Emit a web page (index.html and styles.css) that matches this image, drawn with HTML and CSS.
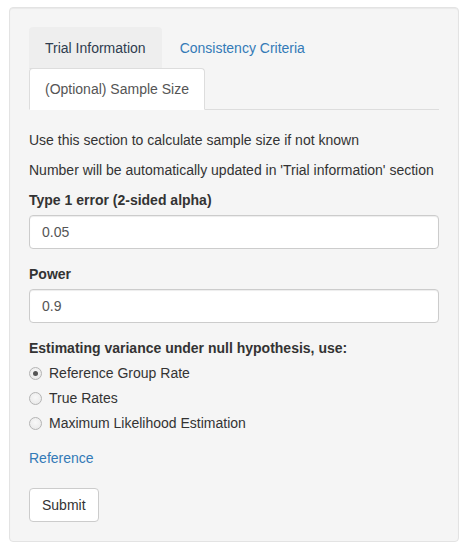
FILE: index.html
```html
<!DOCTYPE html>
<html>
<head>
<meta charset="utf-8">
<link rel="stylesheet" href="styles.css">
</head>
<body>
<div class="well">
  <ul class="nav-tabs">
    <li class="tab tab-hover"><a>Trial Information</a></li>
    <li class="tab"><a class="link">Consistency Criteria</a></li>
    <li class="tab tab-active"><a>(Optional) Sample Size</a></li>
  </ul>
  <div class="tab-pane">
    <p>Use this section to calculate sample size if not known</p>
    <p>Number will be automatically updated in 'Trial information' section</p>
    <div class="form-group">
      <label class="control-label">Type 1 error (2-sided alpha)</label>
      <input class="form-control" type="text" value="0.05">
    </div>
    <div class="form-group">
      <label class="control-label">Power</label>
      <input class="form-control" type="text" value="0.9">
    </div>
    <div class="form-group">
      <label class="control-label">Estimating variance under null hypothesis, use:</label>
      <div class="options">
        <label class="radio"><input type="radio" name="v" checked><span>Reference Group Rate</span></label>
        <label class="radio"><input type="radio" name="v"><span>True Rates</span></label>
        <label class="radio"><input type="radio" name="v"><span>Maximum Likelihood Estimation</span></label>
      </div>
    </div>
    <a class="link ref">Reference</a>
    <div class="actions">
      <button class="btn" type="button">Submit</button>
    </div>
  </div>
</div>
</body>
</html>
```
FILE: styles.css
```css
* { box-sizing: border-box; }
html, body {
  margin: 0;
  padding: 0;
  background: #fff;
}
body {
  font-family: "Liberation Sans", Arial, Helvetica, sans-serif;
  font-size: 14px;
  line-height: 20px;
  color: #333;
}
.well {
  margin: 7px 10px 0 9px;
  width: 450px;
  min-height: 20px;
  padding: 19px;
  background: #f5f5f5;
  border: 1px solid #e3e3e3;
  border-radius: 4px;
  box-shadow: inset 0 1px 1px rgba(0,0,0,.05);
}
.nav-tabs {
  list-style: none;
  margin: 0;
  padding: 0;
  display: flex;
  flex-wrap: wrap;
  border-bottom: 1px solid #ddd;
}
.tab {
  margin: 0 2px -1px 0;
}
.tab a {
  display: block;
  padding: 10px 15px;
  line-height: 20px;
  border: 1px solid transparent;
  border-radius: 4px 4px 0 0;
  cursor: pointer;
}
.tab-hover a {
  background: #eee;
  border-color: #eee #eee #ddd;
  color: #2e3d4f;
}
.tab-active a {
  background: #fff;
  color: #555;
  border-color: #ddd #ddd transparent;
}
.link {
  color: #337ab7;
  text-decoration: none;
}
.tab-pane {
  padding-top: 20px;
}
p {
  margin: 0 0 10px;
}
.form-group {
  margin-bottom: 15px;
}
.control-label {
  display: inline-block;
  font-weight: 700;
  margin-bottom: 5px;
}
.form-control {
  display: block;
  width: 100%;
  height: 34px;
  padding: 6px 12px;
  font-family: inherit;
  font-size: 14px;
  line-height: 20px;
  color: #555;
  background: #fff;
  border: 1px solid #ccc;
  border-radius: 4px;
  box-shadow: inset 0 1px 1px rgba(0,0,0,.075);
  outline: none;
}
.options {
  display: flex;
  flex-direction: column;
  gap: 5px;
}
.radio {
  display: flex;
  align-items: center;
  min-height: 20px;
  font-weight: 400;
  cursor: pointer;
}
.radio input {
  appearance: none;
  -webkit-appearance: none;
  width: 13px;
  height: 13px;
  margin: 0 7px 0 0;
  border: 1px solid #b4b4b4;
  border-radius: 50%;
  background: radial-gradient(circle at 50% 40%, #f8f8f8 0%, #e6e6e6 100%);
  position: relative;
  flex: none;
}
.radio input:checked::after {
  content: "";
  position: absolute;
  left: 3px;
  top: 3px;
  width: 5px;
  height: 5px;
  border-radius: 50%;
  background: #555;
}
.ref {
  display: block;
  width: max-content;
  line-height: 20px;
}
.actions {
  padding-top: 20px;
}
.btn {
  display: inline-block;
  height: 34px;
  padding: 6px 12px;
  font-family: inherit;
  font-size: 14px;
  line-height: 20px;
  color: #333;
  background: #fff;
  border: 1px solid #ccc;
  border-radius: 4px;
  cursor: pointer;
}
```
